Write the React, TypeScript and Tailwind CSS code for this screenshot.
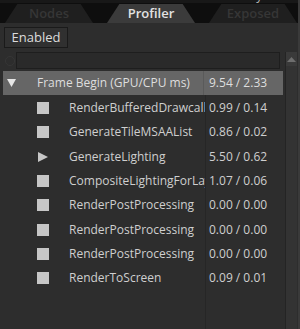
import { ReactNode } from 'react'

type Row = { name: string; value: string; kind: 'box' | 'arrow' }

const rows: Row[] = [
	{ name: 'RenderBufferedDrawcalls', value: '0.99 / 0.14', kind: 'box' },
	{ name: 'GenerateTileMSAAList', value: '0.86 / 0.02', kind: 'box' },
	{ name: 'GenerateLighting', value: '5.50 / 0.62', kind: 'arrow' },
	{ name: 'CompositeLightingForLayers', value: '1.07 / 0.06', kind: 'box' },
	{ name: 'RenderPostProcessing', value: '0.00 / 0.00', kind: 'box' },
	{ name: 'RenderPostProcessing', value: '0.00 / 0.00', kind: 'box' },
	{ name: 'RenderPostProcessing', value: '0.00 / 0.00', kind: 'box' },
	{ name: 'RenderToScreen', value: '0.09 / 0.01', kind: 'box' },
]

const Tab = ({ children, active = false }: { children: ReactNode; active?: boolean }) => (
	<div
		className={`w-[88px] h-[19px] flex items-center justify-center text-[13px] leading-none font-semibold [clip-path:polygon(14%_0,86%_0,100%_100%,0_100%)] ${
			active ? 'bg-[#3b3b3b] text-[#e2e2e2]' : 'bg-[#1f1f1f] text-[#363636]'
		}`}
	>
		{children}
	</div>
)

const TreeRow = ({ row }: { row: Row }) => (
	<div className="h-[24.3px] flex items-center">
		<div className="w-[202px] flex items-center overflow-hidden whitespace-nowrap">
			<div className="w-[34px] shrink-0" />
			{row.kind === 'box' ? (
				<div className="w-[12px] h-[12px] bg-[#c6c6c6] shrink-0" />
			) : (
				<svg width="12" height="12" viewBox="0 0 12 12" className="shrink-0">
					<path d="M1 1 L11 6 L1 11 Z" fill="#c6c6c6" />
				</svg>
			)}
			<span className="ml-[20px] text-[#cfcfcf]">{row.name}</span>
		</div>
		<div className="ml-[4px] text-[#cfcfcf] whitespace-nowrap">{row.value}</div>
	</div>
)

const App = () => {
	return (
		<div className="w-[300px] h-[329px] bg-[#2d2d2d] overflow-hidden flex flex-col font-['Open_Sans',sans-serif] text-[12px] border-r-2 border-[#3a3a3a]">
			<div className="h-[3px] bg-[#181818] overflow-hidden flex items-end justify-end pr-[24px]">
				<span className="text-[12px] leading-none text-[#b5b5b5] translate-y-[-1px]">Selected Layer</span>
			</div>
			<div className="h-[20px] bg-[#0e0e0e] flex items-end pl-[5px] gap-[14px]">
				<Tab>Nodes</Tab>
				<Tab active>Profiler</Tab>
				<Tab>Exposed</Tab>
			</div>
			<div className="pt-[4px] pl-[4px]">
				<button
					type="button"
					className="w-[64px] h-[21px] border border-[#1a1a1a] bg-[#303030] text-[13px] leading-none text-[#dcdcdc]"
				>
					Enabled
				</button>
			</div>
			<div className="flex flex-1 mt-[4px]">
				<div className="flex flex-col w-[283px] pl-[3px]">
					<div className="h-[17px] flex items-center">
						<div className="w-[10px] h-[10px] ml-[2px] rounded-full border border-[#363636]" />
						<div className="ml-[1px] w-[264px] h-[17px] border border-[#1e1e1e] bg-[#2a2a2a]" />
					</div>
					<div className="mt-[2px] h-[24px] bg-[#666666] flex items-center text-[#dedede]">
						<svg width="9" height="8" viewBox="0 0 9 8" className="ml-[4px] shrink-0">
							<path d="M0 0 L9 0 L4.5 8 Z" fill="#e6e6e6" />
						</svg>
						<span className="ml-[21px] w-[166px] whitespace-nowrap">Frame Begin (GPU/CPU ms)</span>
						<div className="w-px h-full bg-[#5a5a5a]" />
						<span className="ml-[5px] whitespace-nowrap">9.54 / 2.33</span>
					</div>
					<div className="relative flex-1 flex flex-col pt-[1px]">
						<div className="absolute left-[202px] top-0 bottom-0 w-px bg-[#262626]" />
						{rows.map((row, i) => (
							<TreeRow key={i} row={row} />
						))}
					</div>
				</div>
				<div className="ml-[2px] w-[12px] flex flex-col bg-[#333333] border-l border-[#242424]">
					<div className="h-[14px] flex items-center justify-center bg-[#3a3a3a]">
						<svg width="9" height="5" viewBox="0 0 9 5">
							<path d="M0 5 L4.5 0 L9 5 Z" fill="#6e6e6e" />
						</svg>
					</div>
				</div>
			</div>
		</div>
	)
}

export default App
